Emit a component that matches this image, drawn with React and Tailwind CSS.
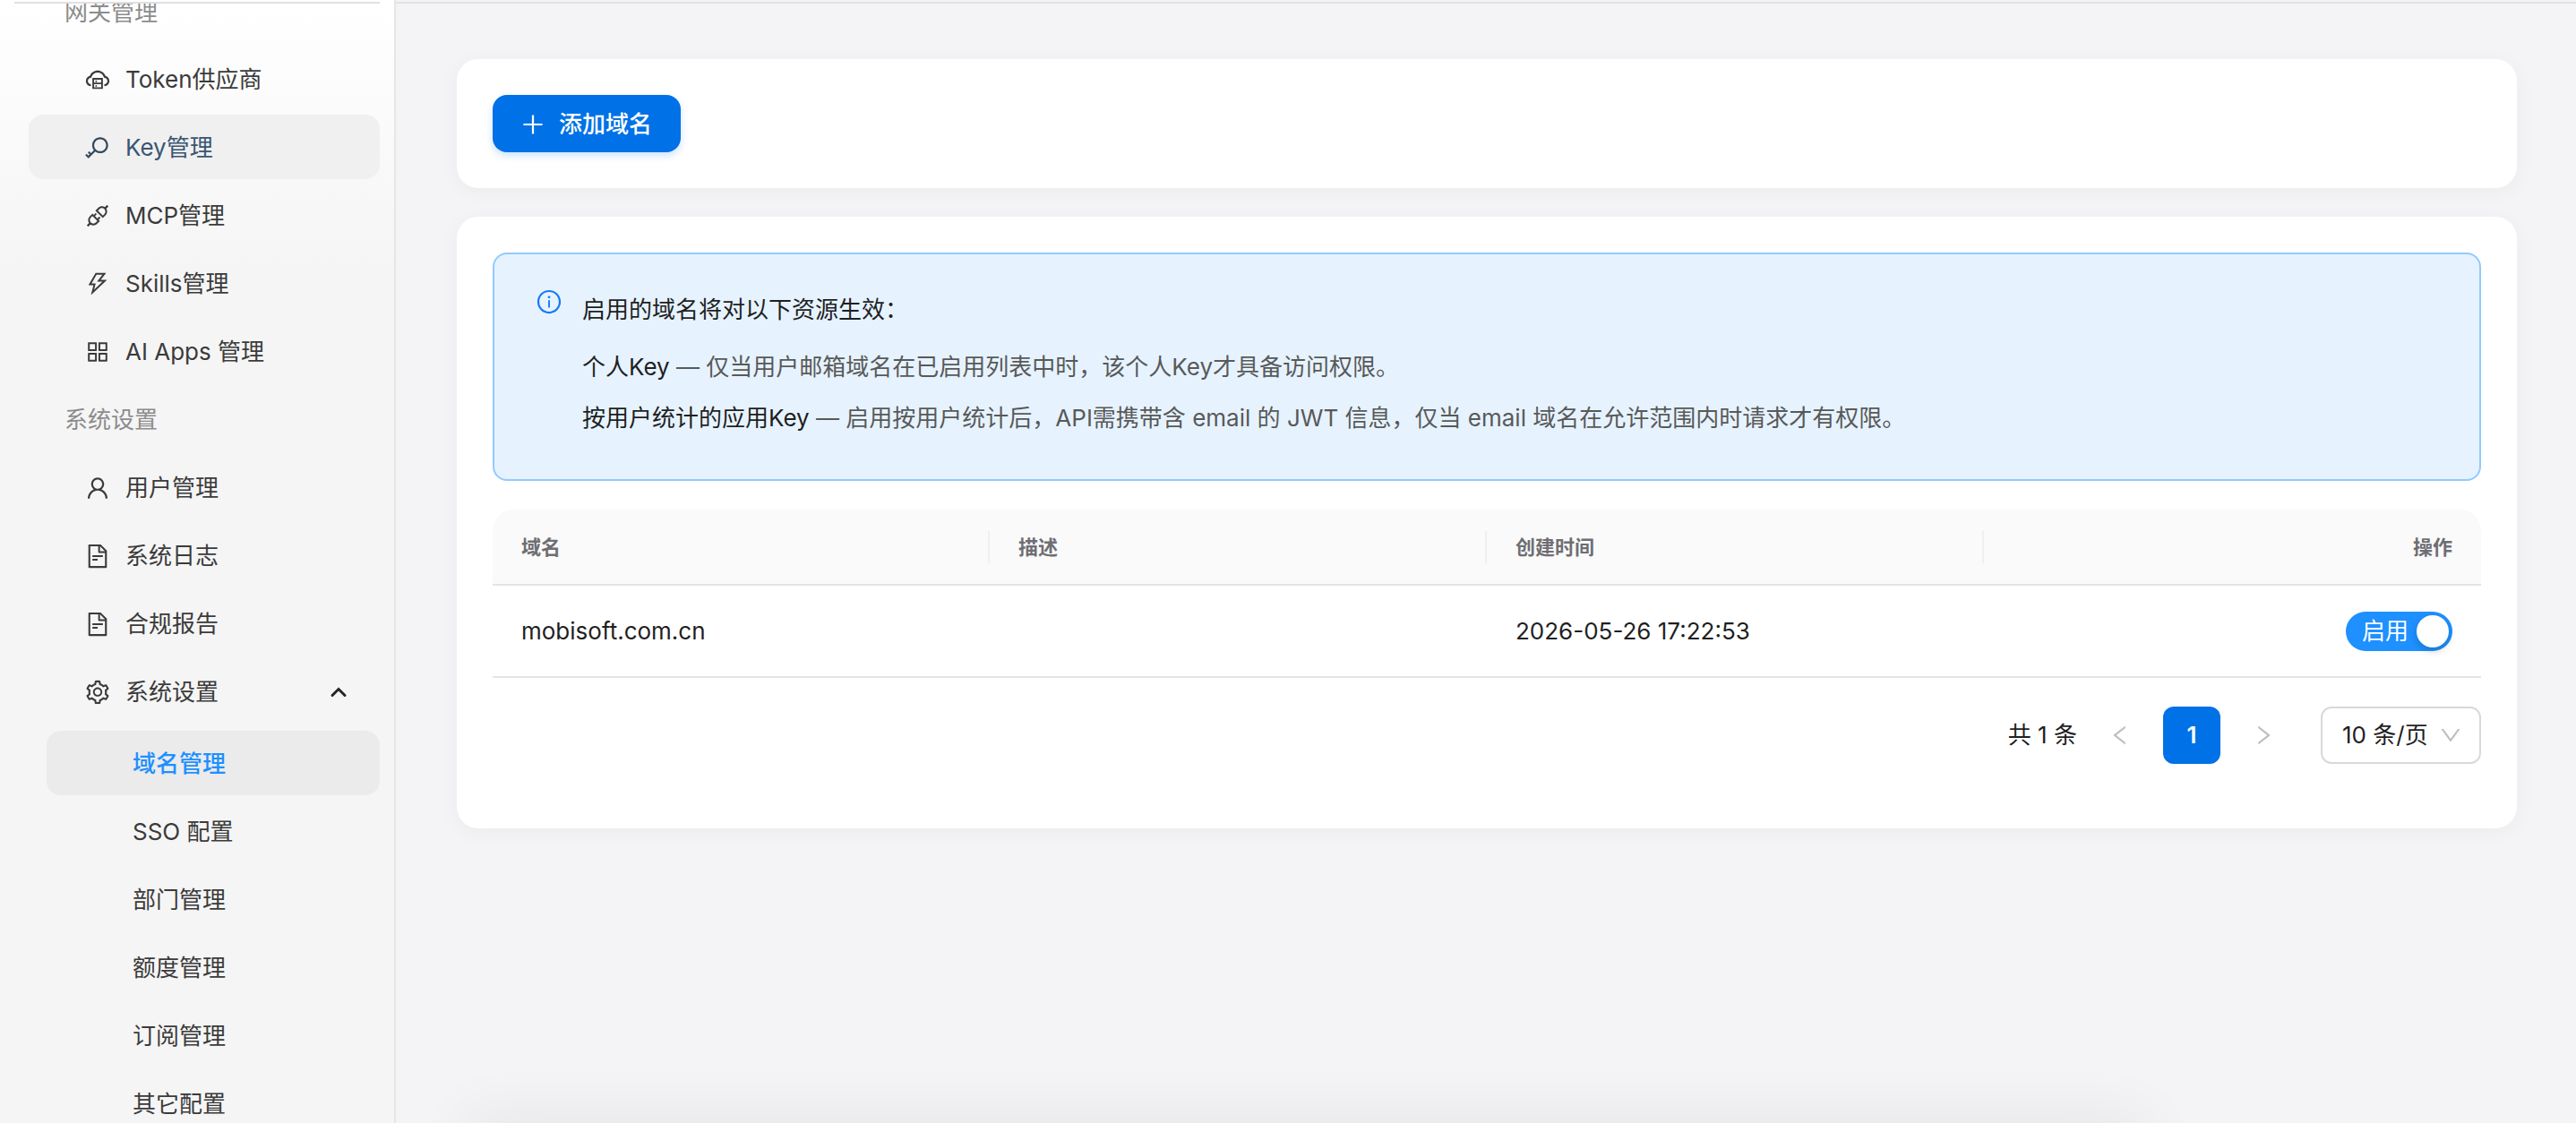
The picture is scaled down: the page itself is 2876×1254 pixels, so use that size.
import React, { useState } from "react";
import {
  AiOutlineCloudServer,
  AiOutlineKey,
  AiOutlineApi,
  AiOutlineThunderbolt,
  AiOutlineAppstore,
  AiOutlineUser,
  AiOutlineFileText,
  AiOutlineSetting,
  AiOutlinePlus,
  AiOutlineInfoCircle,
  AiOutlineLeft,
  AiOutlineRight,
  AiOutlineDown,
} from "react-icons/ai";

const gatewayItems = [
  { label: "Token供应商", icon: AiOutlineCloudServer },
  { label: "Key管理", icon: AiOutlineKey, hovered: true },
  { label: "MCP管理", icon: AiOutlineApi },
  { label: "Skills管理", icon: AiOutlineThunderbolt },
  { label: "AI Apps 管理", icon: AiOutlineAppstore },
];

const systemItems = [
  { label: "用户管理", icon: AiOutlineUser },
  { label: "系统日志", icon: AiOutlineFileText },
  { label: "合规报告", icon: AiOutlineFileText },
];

const settingItems = ["域名管理", "SSO 配置", "部门管理", "额度管理", "订阅管理", "其它配置"];

const columns = ["域名", "描述", "创建时间", "操作"];

function NavItem({ label, icon: Icon, hovered }) {
  return (
    <li>
      <a
        href="#"
        className={
          "flex h-[72px] items-center gap-4 rounded-2xl pt-0.5 pl-[62px] " +
          (hovered ? "bg-[#f0f0f0] text-[#3a5572]" : "text-[#3b3b3b]")
        }
      >
        <Icon className={"size-[30px] shrink-0 " + (hovered ? "text-[#34485c]" : "")} />
        {label}
      </a>
    </li>
  );
}

function Sidebar() {
  return (
    <aside className="flex w-[442px] shrink-0 flex-col border-r-2 border-[#e6e6e6] bg-[#f5f5f5] bg-linear-to-b from-white to-[#f5f5f5] to-[300px]">
      <div className="mx-4 mt-0.5 h-0.5 shrink-0 bg-[#e0e0e0]" />
      <nav className="min-h-0 flex-1 overflow-hidden pr-4 pl-8">
        <h2 className="h-12 pl-10 leading-5 text-[#8c8c8c]">网关管理</h2>
        <ul className="flex flex-col gap-1">
          {gatewayItems.map((item) => (
            <NavItem key={item.label} {...item} />
          ))}
        </ul>
        <h2 className="flex h-20 items-center pt-0.5 pl-10 text-[#8c8c8c]">系统设置</h2>
        <ul className="flex flex-col gap-1">
          {systemItems.map((item) => (
            <NavItem key={item.label} {...item} />
          ))}
          <li>
            <button
              type="button"
              aria-expanded="true"
              className="flex h-[72px] w-full items-center gap-4 pt-0.5 pr-9 pl-[62px] text-left text-[#3b3b3b]"
            >
              <AiOutlineSetting className="size-[30px] shrink-0" />
              <span className="flex-1">系统设置</span>
              <svg viewBox="0 0 20 20" className="size-5 text-[#262626]" fill="none" stroke="currentColor" strokeWidth="3" strokeLinecap="round">
                <path d="M3 13.5 10 6.5 17 13.5" />
              </svg>
            </button>
            <ul className="mt-2 ml-5 flex flex-col gap-1">
              {settingItems.map((label, i) => (
                <li key={label}>
                  <a
                    href="#"
                    aria-current={i === 0 ? "page" : undefined}
                    className={
                      "flex h-[72px] items-center rounded-2xl pt-0.5 pl-24 " +
                      (i === 0 ? "bg-[#ebebeb] font-medium text-[#1e90ff]" : "text-[#3b3b3b]")
                    }
                  >
                    {label}
                  </a>
                </li>
              ))}
            </ul>
          </li>
        </ul>
      </nav>
    </aside>
  );
}

function Notice() {
  return (
    <section className="flex gap-[22px] rounded-2xl border-2 border-[#91caff] bg-[#e6f3ff] pt-[38px] pr-12 pb-12 pl-[46px]">
      <AiOutlineInfoCircle className="size-[30px] shrink-0 text-[#1677ff]" />
      <div className="text-[#595959]">
        <p className="pt-0.5 leading-[44px] text-[#1f1f1f]">启用的域名将对以下资源生效：</p>
        <ul className="mt-[5px]">
          <li className="flex h-[57px] items-center pt-4">
            <span>
              <strong className="font-normal text-[#1f1f1f]">个人Key</strong> — 仅当用户邮箱域名在已启用列表中时，该个人Key才具备访问权限。
            </span>
          </li>
          <li className="flex h-[57px] items-center pt-4">
            <span>
              <strong className="font-normal text-[#1f1f1f]">按用户统计的应用Key</strong> — 启用按用户统计后，API需携带含 email 的 JWT 信息，仅当 email 域名在允许范围内时请求才有权限。
            </span>
          </li>
        </ul>
      </div>
    </section>
  );
}

function DomainTable() {
  const [enabled, setEnabled] = useState(true);
  return (
    <table className="mt-8 w-full table-fixed border-separate border-spacing-0">
      <thead>
        <tr>
          {columns.map((name, i) => (
            <th
              key={name}
              scope="col"
              className={
                "h-[85px] border-b-2 border-[#e4e4e4] bg-[#fafafa] p-0 text-[22px] font-semibold text-[#6e6e73] " +
                (i === 0 ? "rounded-tl-3xl " : "") +
                (i === 3 ? "rounded-tr-3xl text-right" : "text-left")
              }
            >
              <div className={"flex h-9 items-center px-8 " + (i === 3 ? "justify-end" : "border-r-2 border-[#f0f0f0]")}>
                {name}
              </div>
            </th>
          ))}
        </tr>
      </thead>
      <tbody className="text-[#1f1f1f]">
        <tr>
          <td className="h-[103px] border-b-2 border-[#e4e4e4] px-8">mobisoft.com.cn</td>
          <td className="border-b-2 border-[#e4e4e4] px-8" />
          <td className="border-b-2 border-[#e4e4e4] px-8">2026-05-26 17:22:53</td>
          <td className="border-b-2 border-[#e4e4e4] px-8">
            <label
              className={
                "ml-auto flex h-11 w-[119px] cursor-pointer items-center justify-between rounded-full pr-1 pl-[18px] text-white " +
                (enabled ? "bg-[#1e90ff]" : "bg-[#bfbfbf]")
              }
            >
              <input
                type="checkbox"
                role="switch"
                className="sr-only"
                checked={enabled}
                onChange={(e) => setEnabled(e.target.checked)}
              />
              <span>启用</span>
              <span className="size-9 rounded-full bg-white shadow-[0_4px_8px_rgba(0,35,11,0.2)]" />
            </label>
          </td>
        </tr>
      </tbody>
    </table>
  );
}

function Pagination() {
  return (
    <nav aria-label="分页" className="mt-8 flex h-16 items-center justify-end text-[#1f1f1f]">
      <span className="mr-4">共 1 条</span>
      <button type="button" disabled aria-label="上一页" className="flex size-16 items-center justify-center text-[#bfbfbf]">
        <AiOutlineLeft className="size-7" />
      </button>
      <button type="button" aria-current="page" className="mx-4 size-16 rounded-xl bg-[#0071e6] font-semibold text-white">
        1
      </button>
      <button type="button" disabled aria-label="下一页" className="flex size-16 items-center justify-center text-[#bfbfbf]">
        <AiOutlineRight className="size-7" />
      </button>
      <div className="relative ml-8">
        <select
          aria-label="每页条数"
          className="h-16 w-[179px] appearance-none rounded-xl border-2 border-[#d9d9d9] bg-white pl-[22px]"
        >
          <option>10 条/页</option>
        </select>
        <AiOutlineDown className="pointer-events-none absolute top-[18px] right-5 size-7 text-[#bfbfbf]" />
      </div>
    </nav>
  );
}

export default function App() {
  return (
    <div className="flex h-screen overflow-hidden bg-[#f4f4f7] font-[Inter,'Noto_Sans_CJK_SC',sans-serif] text-[26px] leading-10">
      <Sidebar />
      <div className="relative flex min-w-0 flex-1 flex-col">
        <div className="mt-0.5 h-0.5 shrink-0 bg-[#e2e2e5]" />
        <main className="flex flex-col gap-8 pt-[62px] pr-[66px] pl-[68px]">
          <section className="rounded-3xl bg-white p-10 shadow-[0_4px_24px_rgba(0,0,0,0.04)]">
            <button
              type="button"
              className="flex h-16 items-center gap-[14px] rounded-2xl bg-[#0071e6] pt-0.5 pr-8 pl-[30px] font-medium text-white shadow-[0_4px_8px_rgba(0,113,230,0.2)]"
            >
              <AiOutlinePlus className="size-[30px]" />
              添加域名
            </button>
          </section>
          <section className="rounded-3xl bg-white px-10 pt-10 pb-[72px] shadow-[0_4px_24px_rgba(0,0,0,0.04)]">
            <Notice />
            <DomainTable />
            <Pagination />
          </section>
        </main>
        <div className="absolute top-full right-[480px] left-[80px] h-10 shadow-[0_0_70px_rgba(0,0,0,0.09)]" />
      </div>
    </div>
  );
}
